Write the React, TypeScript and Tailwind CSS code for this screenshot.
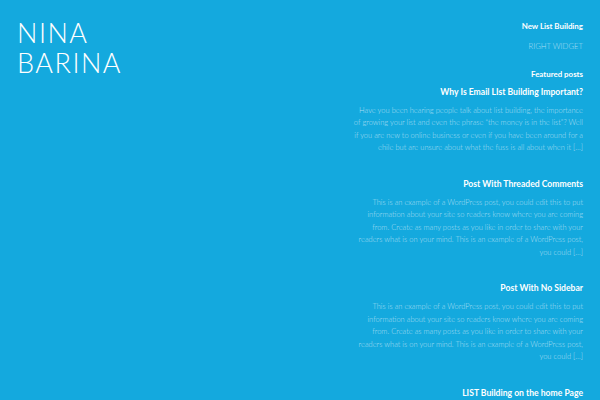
// App.tsx — blog front page: site title on the left, widget column on the right.

const sample = [
  'This is an example of a WordPress post, you could edit this to put',
  'information about your site so readers know where you are coming',
  'from. Create as many posts as you like in order to share with your',
  'readers what is on your mind. This is an example of a WordPress post,',
  'you could [\u2026]',
]

const posts = [
  {
    title: 'Why Is Email LIst Building Important?',
    lines: [
      'Have you been hearing people talk about list building, the importance',
      'of growing your list and even the phrase \u201cthe money is in the list\u201d? Well',
      'if you are new to online business or even if you have been around for a',
      'ehile but are unsure about what the fuss is all about when it [\u2026]',
    ],
  },
  { title: 'Post With Threaded Comments', lines: sample },
  { title: 'Post With No Sidebar', lines: sample },
  { title: 'LIST Building on the home Page', lines: [] },
]

export default function App() {
  return (
    <div className="h-screen overflow-hidden bg-[#14a9de] font-['Lato',sans-serif] flex justify-between px-[17px]">

      {/* Site title */}
      <header className="pt-[18px]">
        <h1 className="text-[27px] leading-[30px] font-light tracking-[1.5px] text-white uppercase">
          Nina<br />Barina
        </h1>
      </header>

      {/* Right widget column */}
      <aside className="w-[250px] text-right pt-[20px]">
        <h3 className="text-[7.9px] leading-[12px] font-bold text-white">New List Building</h3>
        <p className="mt-[7.5px] text-[7.7px] leading-[12px] font-light text-[#addff3] uppercase">Right widget</p>

        <h3 className="mt-[16px] text-[7.9px] leading-[12px] font-bold text-white">Featured posts</h3>

        <div className="mt-[6px]">
          {posts.map(post => (
            <div key={post.title} className="mb-[23px]">
              <h4 className="text-[8.6px] leading-[13px] font-bold text-white">{post.title}</h4>
              {post.lines.length > 0 && (
                <p className="mt-[6px] text-[7.5px] leading-[12.5px] font-light text-[#addff3]">
                  {post.lines.map(line => (
                    <span key={line} className="block whitespace-nowrap">{line}</span>
                  ))}
                </p>
              )}
            </div>
          ))}
        </div>
      </aside>
    </div>
  )
}
